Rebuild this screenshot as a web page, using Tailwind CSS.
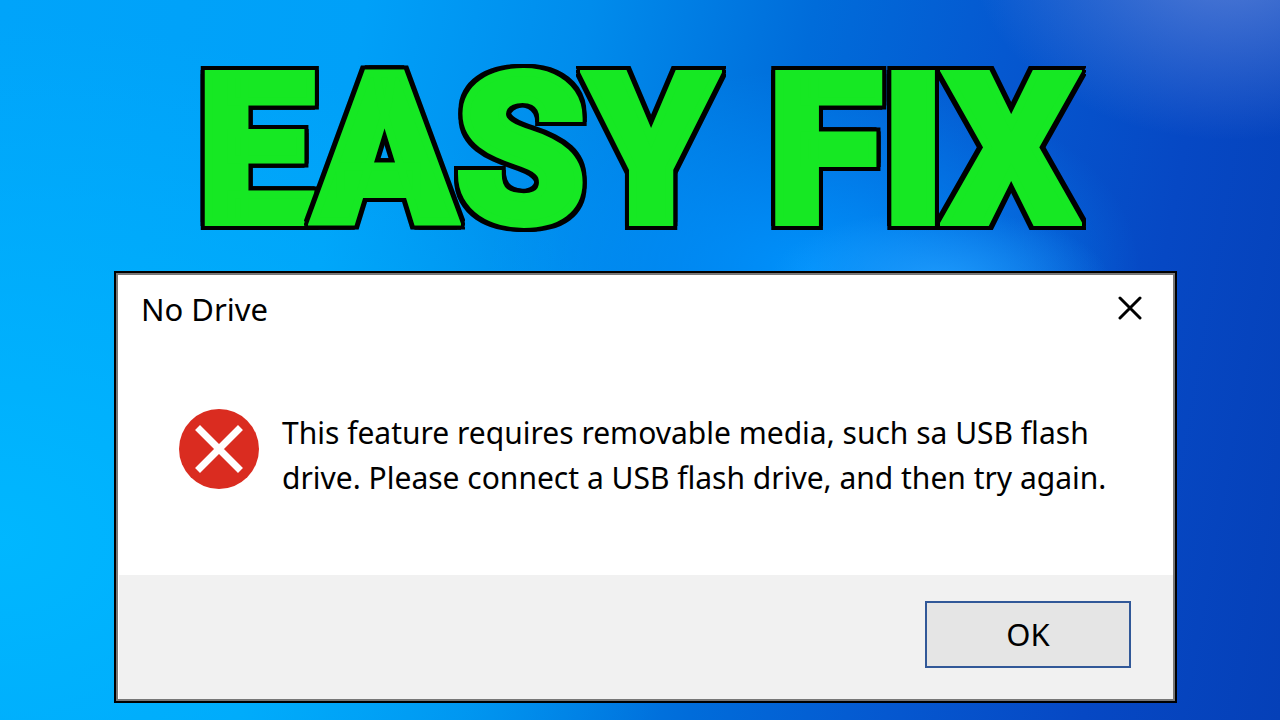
<!DOCTYPE html>
<html lang="en">
    <head>
        <meta charset="UTF-8"/>
        <meta name="viewport" content="width=device-width, initial-scale=1.0"/>
        <title>No Drive</title>

        <!-- Tailwind CSS  -->
        <script src="https://cdn.jsdelivr.net/npm/@tailwindcss/browser@4"></script>

        <style>
            /* blue wallpaper with the light spots */
            body
            {
                background:
                    radial-gradient(ellipse 260px 190px at 1230px -50px, rgba(105, 140, 220, 0.8), transparent),
                    radial-gradient(ellipse 170px 70px at 940px 280px, rgba(35, 160, 255, 0.8), transparent),
                    radial-gradient(ellipse 330px 200px at 810px 270px, rgba(0, 150, 255, 0.9), transparent),
                    radial-gradient(ellipse 700px 520px at 0px 540px, rgba(0, 184, 255, 0.95), transparent),
                    linear-gradient(100deg, #00a4fa 0%, #00a0f8 26%, #008cec 42%, #006cda 58%, #0558d0 72%, #0648c4 86%, #0540b8 100%);
            }
            /* fat green letter with a black outline round it */
            h1 span
            {
                display: inline-block;
                padding: 0 16px;
                margin: 0 -16px;
                -webkit-text-stroke: 8px #16e823;
                filter: drop-shadow(4px 0 0 #000) drop-shadow(-4px 0 0 #000) drop-shadow(0 4px 0 #000) drop-shadow(0 -4px 0 #000);
            }
        </style>
    </head>
    <body class="min-h-screen">
        <main class="min-h-screen flex flex-col pl-[114px] pr-[103px] pb-4">
            <h1 class="h-[271px] pt-[47px] pr-4 text-center whitespace-nowrap font-black text-[208px] leading-[208px] text-[#16e823]" style="font-family: Roboto, sans-serif"><span>E</span><span>A</span><span>S</span><span>Y</span> <span>F</span><span>I</span><span>X</span></h1>

            <div role="dialog" aria-labelledby="title" aria-describedby="message" class="flex flex-col w-full h-[432px] bg-white border-2 border-l-3 border-black outline-[#777] -outline-offset-4 outline-2 text-black font-normal" style="font-family: 'Noto Sans', sans-serif">
                <div class="flex items-center justify-between pt-3 pl-6 pr-[32px]">
                    <h2 id="title" class="text-[31px] leading-[48px]">No Drive</h2>
                    <button type="button" aria-label="Close">
                        <svg class="w-[26px] h-[26px]" viewBox="0 0 26 26" fill="none" stroke="#000" stroke-width="3" stroke-linecap="round">
                            <path d="M3 2 23 22M23 2 3 22"/>
                        </svg>
                    </button>
                </div>
                <div class="flex-1 flex items-start gap-[22px] pt-[75px] pl-[61px]">
                    <svg class="shrink-0 w-[82px] h-[82px]" viewBox="0 0 82 82">
                        <circle cx="41" cy="41" r="40" fill="#da2c20"/>
                        <path d="M22 22 60 60M60 22 22 60" fill="none" stroke="#fff" stroke-width="7" stroke-linecap="square"/>
                    </svg>
                    <p id="message" class="text-[30px] leading-[45px] pt-[2px]">This feature requires removable media, such sa USB flash<br>drive. Please connect a USB flash drive, and then try again.</p>
                </div>
                <div class="flex justify-end items-start h-[124px] pt-[26px] pr-[42px] mx-[2px] mb-[2px] bg-[#f1f1f1]">
                    <button type="button" class="w-[206px] h-[67px] text-[31px] bg-[#e5e5e5] border-2 border-[#315898]">OK</button>
                </div>
            </div>
        </main>
    </body>
</html>
